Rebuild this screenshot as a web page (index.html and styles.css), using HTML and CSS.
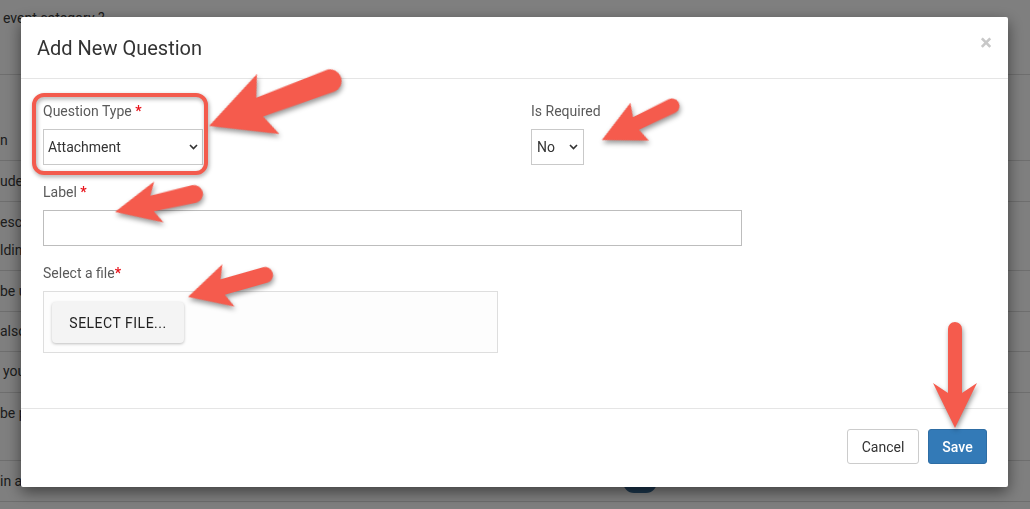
FILE: index.html
```html
<!DOCTYPE html>
<html>
<head>
<meta charset="utf-8">
<link rel="stylesheet" href="styles.css">
</head>
<body>
<div class="page">
  <div class="row r0"><span>event category ?</span></div>
  <div class="row r1"><span>n</span></div>
  <div class="row r2"><span>ude</span></div>
  <div class="row r3"><span>esc<br>ldin</span></div>
  <div class="row r4"><span>be u</span></div>
  <div class="row r5"><span>also</span></div>
  <div class="row r6"><span>you</span></div>
  <div class="row r7"><span>be p</span></div>
  <div class="row r8"><span class="r8text">in a</span><span class="toggle"></span></div>
  <div class="row r9"></div>
</div>
<div class="backdrop"></div>

<div class="modal-wrap">
  <div class="modal">
    <div class="modal-header">
      <h4 class="modal-title">Add New Question</h4>
      <span class="close">×</span>
    </div>
    <div class="modal-body">
      <div class="form-row">
        <div class="col-left">
          <div class="label">Question Type <span class="req">*</span></div>
          <div class="select sel-type">
            <span>Attachment</span>
            <svg class="chev" width="9" height="6" viewBox="0 0 9 6"><polyline points="1,1 4.5,4.6 8,1" fill="none" stroke="#333" stroke-width="1.6"/></svg>
          </div>
        </div>
        <div class="col-right">
          <div class="label">Is Required</div>
          <div class="select sel-req">
            <span>No</span>
            <svg class="chev" width="9" height="6" viewBox="0 0 9 6"><polyline points="1,1 4.5,4.6 8,1" fill="none" stroke="#333" stroke-width="1.6"/></svg>
          </div>
        </div>
      </div>
      <div class="group g-label">
        <div class="label">Label <span class="req">*</span></div>
        <div class="input"></div>
      </div>
      <div class="group g-file">
        <div class="label">Select a file<span class="req">*</span></div>
        <div class="filebox">
          <div class="filebtn">SELECT FILE...</div>
        </div>
      </div>
    </div>
    <div class="modal-footer">
      <div class="btn btn-cancel">Cancel</div>
      <div class="btn btn-save">Save</div>
    </div>
  </div>
</div>

<div class="highlight"></div>

<svg class="arrows" width="1030" height="509" viewBox="0 0 1030 509">
  <g class="arrow">
    <path transform="translate(330 81) rotate(159.6)" d="M0,-11.5 L75,-10 L66,-32 L129,0 L66,32 L75,10 L0,11.5 A11.5,11.5 0 0 1 0,-11.5 Z"/>
    <path transform="translate(672 106) rotate(154.1)" d="M0,-7.5 L40,-7 L36,-21 L78,0 L36,21 L40,7 L0,7.5 A7.5,7.5 0 0 1 0,-7.5 Z"/>
    <path transform="translate(194 194) rotate(167.2)" d="M0,-9 L43,-8 L36,-21 L81,0 L36,21 L43,8 L0,9 A9,9 0 0 1 0,-9 Z"/>
    <path transform="translate(265 275) rotate(164.1)" d="M0,-8 L44,-8 L38,-22 L80,0 L38,22 L44,8 L0,8 A8,8 0 0 1 0,-8 Z"/>
    <path transform="translate(955 329) rotate(90)" d="M0,-7 L64,-7 L54,-22 L99,0 L54,22 L64,7 L0,7 A7,7 0 0 1 0,-7 Z"/>
  </g>
</svg>
</body>
</html>
```

FILE: styles.css
```css
html, body {
  margin: 0;
  padding: 0;
}
body {
  width: 1030px;
  height: 509px;
  overflow: hidden;
  position: relative;
  font-family: Roboto, "Liberation Sans", sans-serif;
  background: #fff;
}

/* background page */
.page {
  display: flex;
  flex-direction: column;
  font-size: 14px;
  color: #3a3a3a;
  line-height: 16px;
}
.row {
  box-sizing: border-box;
  border-bottom: 1px solid #dcdcdc;
  white-space: nowrap;
  display: flex;
}
.r0 { height: 75px; padding: 10px 0 0 3px; }
.r1 { height: 86px; padding-top: 57px; }
.r2 { height: 41px; padding-top: 12px; }
.r3 { height: 69px; padding-top: 6px; line-height: 28px; }
.r4 { height: 41px; padding-top: 12px; }
.r5 { height: 40px; padding-top: 11px; }
.r6 { height: 41px; padding-top: 11px; padding-left: 3px; }
.r7 { height: 68px; padding-top: 12px; }
.r8 { height: 41px; padding-top: 12px; }
.r9 { height: 7px; border-bottom: none; }
.r8text { width: 623px; }
.toggle {
  width: 34px;
  height: 22px;
  border-radius: 11px;
  background: #3b6f9c;
  margin-top: -2px;
}

.backdrop {
  position: fixed;
  inset: 0;
  background: rgba(0, 0, 0, 0.5);
}

/* modal */
.modal-wrap {
  position: fixed;
  inset: 0;
  padding: 17px 0 0 21px;
}
.modal {
  width: 987px;
  height: 470px;
  background: #fff;
  border-radius: 2px;
  box-shadow: 0 5px 15px rgba(0, 0, 0, 0.5);
  display: flex;
  flex-direction: column;
}
.modal-header {
  box-sizing: border-box;
  height: 62px;
  border-bottom: 1px solid #e5e5e5;
  display: flex;
  align-items: center;
  justify-content: space-between;
  padding: 0 16px;
}
.modal-title {
  margin: 0;
  font-size: 20px;
  font-weight: 400;
  color: #333;
  line-height: 28px;
}
.close {
  font-size: 22px;
  font-weight: 700;
  color: #c8c8c8;
  line-height: 20px;
  margin-top: -10px;
}
.modal-body {
  box-sizing: border-box;
  height: 329px;
  padding: 22px 22px 0;
}
.form-row {
  display: flex;
}
.col-left { width: 488px; }
.label {
  font-size: 14px;
  line-height: 20px;
  color: #5a5a5a;
  margin-bottom: 8px;
}
.req { color: #e8141c; font-weight: 700; }
.select {
  box-sizing: border-box;
  height: 36px;
  border: 1px solid #c9c9c9;
  display: flex;
  align-items: center;
  justify-content: space-between;
  font-size: 14px;
  color: #333;
}
.sel-type { width: 160px; padding: 0 4px 0 4px; }
.sel-req { width: 53px; padding: 0 5px 0 5px; }
.chev { display: block; }
.group { margin-top: 16px; }
.g-label { margin-top: 17px; }
.g-label .label { margin-bottom: 8px; }
.g-file { margin-top: 17px; }
.input {
  box-sizing: border-box;
  width: 699px;
  height: 36px;
  border: 1px solid #bdbdbd;
}
.filebox {
  box-sizing: border-box;
  width: 455px;
  height: 62px;
  border: 1px solid #dedede;
  background: #fdfdfd;
  padding: 10px 8px;
}
.filebtn {
  width: 132px;
  height: 41px;
  box-sizing: border-box;
  background: #f4f4f4;
  border-radius: 4px;
  box-shadow: 0 1px 3px rgba(0, 0, 0, 0.25);
  display: flex;
  align-items: center;
  justify-content: center;
  font-size: 14px;
  color: #222;
  letter-spacing: 0.5px;
}
.modal-footer {
  flex: 1;
  border-top: 1px solid #e5e5e5;
  display: flex;
  justify-content: flex-end;
  align-items: flex-start;
  padding: 20px 21px 0;
}
.btn {
  box-sizing: border-box;
  height: 35px;
  border-radius: 3px;
  font-size: 14px;
  display: flex;
  align-items: center;
  justify-content: center;
}
.btn-cancel {
  width: 72px;
  border: 1px solid #ccc;
  background: #fff;
  color: #333;
}
.btn-save {
  width: 59px;
  margin-left: 9px;
  border: 1px solid #2e6da4;
  background: #337ab7;
  color: #fff;
  font-weight: 500;
}

/* annotations */
.highlight {
  position: absolute;
  left: 32px;
  top: 93px;
  width: 176px;
  height: 82px;
  box-sizing: border-box;
  border: 4px solid #f35b4d;
  border-radius: 12px;
  filter: drop-shadow(1px 2px 2px rgba(0, 0, 0, 0.35));
}
.arrows {
  position: absolute;
  left: 0;
  top: 0;
  pointer-events: none;
}
.arrow {
  fill: #f55b4d;
  filter: drop-shadow(1px 3px 2.5px rgba(0, 0, 0, 0.4));
}
```
